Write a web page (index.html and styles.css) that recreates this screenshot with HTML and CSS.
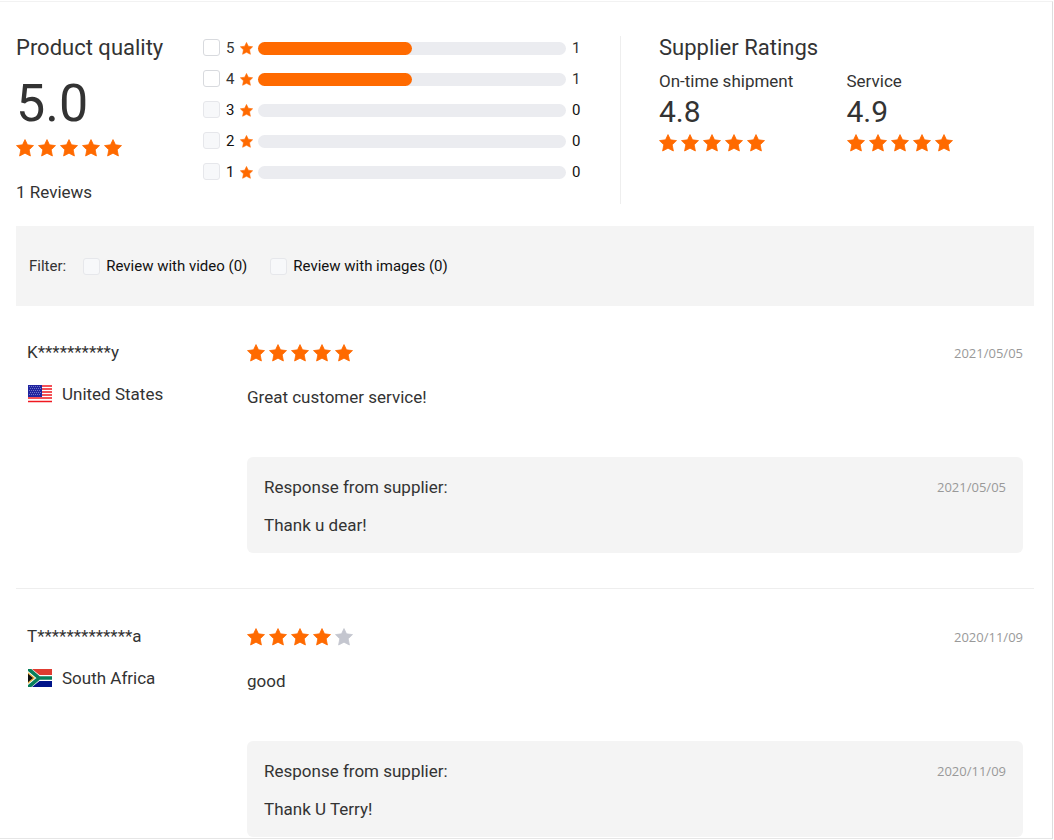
FILE: index.html
```html
<!DOCTYPE html>
<html lang="en">
<head>
<meta charset="utf-8">
<title>Product reviews</title>
<link rel="stylesheet" href="styles.css">
</head>
<body>
<svg class="defs" aria-hidden="true">
  <symbol id="star" viewBox="0 0 18 18"><path d="M9 .6 11.500 5.800l6 .8-4.300 4.200 1.200 6.200L9 14.200 3.600 17l1.200-6.200L.5 6.600l6-.8z" stroke-linejoin="round" stroke-width=".8" stroke="currentColor" fill="currentColor"/></symbol>
</svg>
<main class="panel">
  <section class="summary">
    <div class="quality">
      <h2 class="title">Product quality</h2>
      <div class="score">5.0</div>
      <div class="stars"><svg><use href="#star"/></svg><svg><use href="#star"/></svg><svg><use href="#star"/></svg><svg><use href="#star"/></svg><svg><use href="#star"/></svg></div>
      <div class="total">1 Reviews</div>
    </div>
    <div class="bars">
      <label class="bar-row"><input class="check" type="checkbox"><span class="level">5</span><svg class="mini"><use href="#star"/></svg><span class="track"><span class="fill" style="width:50%"></span></span><span class="count">1</span></label>
      <label class="bar-row"><input class="check" type="checkbox"><span class="level">4</span><svg class="mini"><use href="#star"/></svg><span class="track"><span class="fill" style="width:50%"></span></span><span class="count">1</span></label>
      <label class="bar-row none"><input class="check" type="checkbox" disabled><span class="level">3</span><svg class="mini"><use href="#star"/></svg><span class="track"></span><span class="count">0</span></label>
      <label class="bar-row none"><input class="check" type="checkbox" disabled><span class="level">2</span><svg class="mini"><use href="#star"/></svg><span class="track"></span><span class="count">0</span></label>
      <label class="bar-row none"><input class="check" type="checkbox" disabled><span class="level">1</span><svg class="mini"><use href="#star"/></svg><span class="track"></span><span class="count">0</span></label>
    </div>
    <div class="supplier">
      <h2 class="title">Supplier Ratings</h2>
      <div class="ratings">
        <div class="rating">
          <div class="rating-name">On-time shipment</div>
          <div class="rating-score">4.8</div>
          <div class="stars"><svg><use href="#star"/></svg><svg><use href="#star"/></svg><svg><use href="#star"/></svg><svg><use href="#star"/></svg><svg><use href="#star"/></svg></div>
        </div>
        <div class="rating">
          <div class="rating-name">Service</div>
          <div class="rating-score">4.9</div>
          <div class="stars"><svg><use href="#star"/></svg><svg><use href="#star"/></svg><svg><use href="#star"/></svg><svg><use href="#star"/></svg><svg><use href="#star"/></svg></div>
        </div>
      </div>
    </div>
  </section>

  <section class="filter">
    <span class="filter-name">Filter:</span>
    <label class="option"><input class="check" type="checkbox" disabled>Review with video (0)</label>
    <label class="option"><input class="check" type="checkbox" disabled>Review with images (0)</label>
  </section>

  <article class="review">
    <div class="author">
      <div class="name">K**********y</div>
      <div class="country">
        <svg class="flag" viewBox="0 0 24 18" aria-hidden="true">
          <path fill="#fff" d="M0 0h24v18H0z"/>
          <path stroke="#f01820" stroke-width="1.500" d="M0 1h24M0 4h24M0 7h24M0 10h24M0 13h24M0 16.500h24"/>
          <path fill="#2024a0" d="M0 0h14v12H0z"/>
          <path stroke="#7078c8" stroke-width="1" stroke-dasharray="1 1" d="M1 1.500h12M2 3.500h11M1 5.500h12M2 7.500h11M1 9.500h12"/>
        </svg>
        <span>United States</span>
      </div>
    </div>
    <div class="content">
      <div class="review-top">
        <div class="stars"><svg><use href="#star"/></svg><svg><use href="#star"/></svg><svg><use href="#star"/></svg><svg><use href="#star"/></svg><svg><use href="#star"/></svg></div>
        <time class="date">2021/05/05</time>
      </div>
      <p class="comment">Great customer service!</p>
      <div class="reply">
        <div class="reply-top"><span>Response from supplier:</span><time class="date">2021/05/05</time></div>
        <p class="reply-text">Thank u dear!</p>
      </div>
    </div>
  </article>

  <article class="review">
    <div class="author">
      <div class="name">T*************a</div>
      <div class="country">
        <svg class="flag" viewBox="0 0 24 18" aria-hidden="true">
          <path fill="#fff" d="M0 0h24v18H0z"/>
          <path fill="#e03c31" d="M4 0h20v6H11.500z"/>
          <path fill="#001489" d="M4 18h20v-6H11.500z"/>
          <path fill="none" stroke="#087f5b" stroke-width="3.600" d="M0-.5 11 9 0 18.500M10 9h14"/>
          <path fill="#101010" stroke="#e8ae3b" stroke-width="1.300" d="M-1 3.200 6 9l-7 5.800z"/>
        </svg>
        <span>South Africa</span>
      </div>
    </div>
    <div class="content">
      <div class="review-top">
        <div class="stars"><svg><use href="#star"/></svg><svg><use href="#star"/></svg><svg><use href="#star"/></svg><svg><use href="#star"/></svg><svg class="off"><use href="#star"/></svg></div>
        <time class="date">2020/11/09</time>
      </div>
      <p class="comment">good</p>
      <div class="reply">
        <div class="reply-top"><span>Response from supplier:</span><time class="date">2020/11/09</time></div>
        <p class="reply-text">Thank U Terry!</p>
      </div>
    </div>
  </article>
</main>
</body>
</html>
```

FILE: styles.css
```css
* { box-sizing: border-box; }
body {
  margin: 0;
  padding: 1px 1px 0 0;
  background: #fff;
  color: #333;
  font: 400 17px/24px Roboto, "Liberation Sans", sans-serif;
}
h2, p { margin: 0; }
.defs { position: absolute; width: 0; height: 0; }
.panel {
  border-top: 1px solid #f2f2f2;
  border-right: 1px solid #ddd;
  border-bottom: 1px solid #e6e6e6;
  padding: 34px 18px 1px 16px;
}
.summary {
  display: grid;
  grid-template-columns: 187px 1fr 414px;
  min-height: 168px;
}
.title { font-size: 22px; line-height: 24px; font-weight: 400; }
.score { font-size: 52px; line-height: 60px; margin-top: 14px; }
.stars { display: flex; gap: 4px; color: #ff6a00; }
.stars svg { width: 18px; height: 18px; display: block; }
.stars .off { color: #c4c6cf; }
.quality .stars { margin-top: 5px; }
.total { margin-top: 23px; }
.bars {
  display: flex;
  flex-direction: column;
  gap: 14px;
  padding: 3px 40px 0 0;
}
.bar-row {
  display: flex;
  align-items: center;
  height: 17px;
  font-size: 15px;
}
.none { color: #111; }
.check {
  appearance: none;
  flex: none;
  width: 17px;
  height: 17px;
  margin: 0;
  border: 1px solid #d8dade;
  border-radius: 3px;
  background: #fff;
}
.check:disabled { border-color: #e6e7eb; background: #f7f8fa; }
.level { width: 14px; margin-left: 6px; }
.mini { width: 13px; height: 13px; color: #ff6a00; margin: 1px 5px 0 0; }
.track { flex: 1; height: 13px; margin-top: 1px; border-radius: 7px; background: #ebecf0; }
.fill { display: block; height: 13px; border-radius: 7px; background: #ff6a00; }
.count { width: 8px; margin-left: 6px; }
.supplier { border-left: 1px solid #eee; padding-left: 38px; }
.ratings { display: grid; grid-template-columns: 1fr 1fr; margin-top: 9px; }
.rating-score { font-size: 30px; line-height: 38px; }
.rating .stars { margin-top: 3px; }
.filter {
  display: flex;
  align-items: center;
  height: 80px;
  margin-top: 22px;
  padding-left: 13px;
  background: #f4f4f4;
  font-size: 15px;
}
.filter-name { margin-right: 17px; }
.option { display: flex; align-items: center; gap: 6px; margin-right: 23px; color: #111; }
.review {
  display: grid;
  grid-template-columns: 220px 1fr;
  padding: 34px 11px 35px;
  border-bottom: 1px solid #eee;
}
.review + .review { border: 0; padding: 35px 11px 0; }
.country { display: flex; align-items: center; margin-top: 18px; gap: 10px; }
.flag { width: 24px; height: 18px; margin-left: 1px; }
.review-top, .reply-top { display: flex; align-items: center; justify-content: space-between; }
.review-top { padding-top: 1px; }
.date { font: 400 13px/24px "Open Sans", "Noto Sans", sans-serif; color: #999; }
.comment { margin-top: 20px; }
.reply {
  margin-top: 48px;
  padding: 18px 17px 16px;
  border-radius: 6px;
  background: #f4f4f4;
}
.reply-text { margin-top: 14px; }
```
